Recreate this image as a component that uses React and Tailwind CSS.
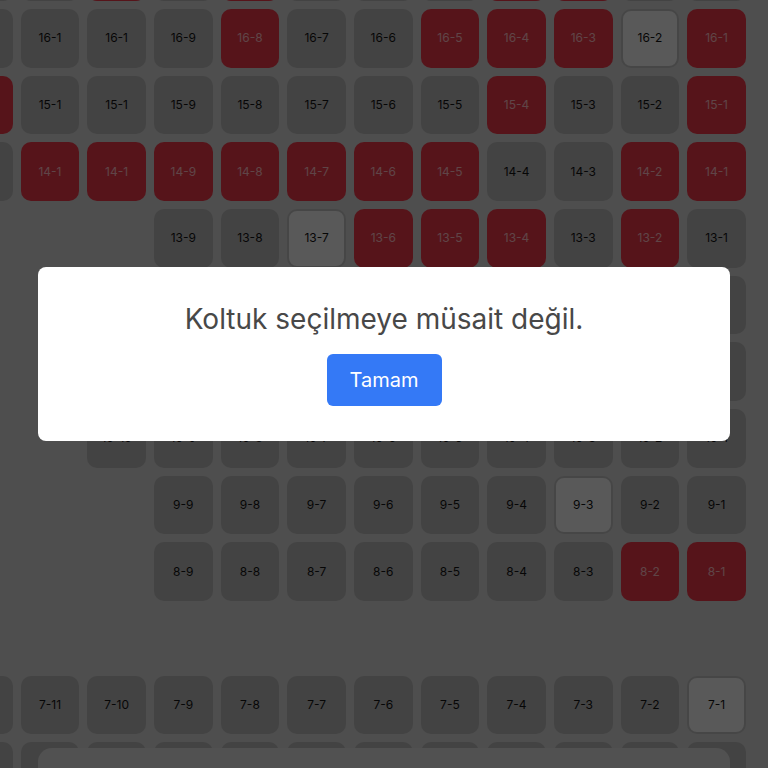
import React from "react";

// Seat states: g = free, r = taken, l = highlighted (outlined), null = no seat
const ROWS = [
  { n: 17, cells: ["g", "g", "r", "g", "r", "g", "g", "g", "r", "r", "g", "g"], labels: [] },
  {
    n: 16,
    cells: ["g", "g", "g", "g", "r", "g", "g", "r", "r", "r", "l", "r"],
    labels: ["", "16-1", "16-1", "16-9", "16-8", "16-7", "16-6", "16-5", "16-4", "16-3", "16-2", "16-1"],
  },
  {
    n: 15,
    cells: ["r", "g", "g", "g", "g", "g", "g", "g", "r", "g", "g", "r"],
    labels: ["", "15-1", "15-1", "15-9", "15-8", "15-7", "15-6", "15-5", "15-4", "15-3", "15-2", "15-1"],
  },
  {
    n: 14,
    cells: ["g", "r", "r", "r", "r", "r", "r", "r", "g", "g", "r", "r"],
    labels: ["", "14-1", "14-1", "14-9", "14-8", "14-7", "14-6", "14-5", "14-4", "14-3", "14-2", "14-1"],
  },
  {
    n: 13,
    cells: [null, null, null, "g", "g", "l", "r", "r", "r", "g", "r", "g"],
    labels: ["", "", "", "13-9", "13-8", "13-7", "13-6", "13-5", "13-4", "13-3", "13-2", "13-1"],
  },
  {
    n: 12,
    cells: [null, null, "g", "g", "g", "g", "g", "g", "g", "g", "g", "g"],
    labels: ["", "", "12-10", "12-9", "12-8", "12-7", "12-6", "12-5", "12-4", "12-3", "12-2", "12-1"],
  },
  {
    n: 11,
    cells: [null, null, "g", "g", "g", "g", "g", "g", "g", "g", "g", "g"],
    labels: ["", "", "11-10", "11-9", "11-8", "11-7", "11-6", "11-5", "11-4", "11-3", "11-2", "11-1"],
  },
  {
    n: 10,
    cells: [null, null, "g", "g", "g", "g", "g", "g", "g", "g", "g", "g"],
    labels: ["", "", "10-10", "10-9", "10-8", "10-7", "10-6", "10-5", "10-4", "10-3", "10-2", "10-1"],
  },
  {
    n: 9,
    cells: [null, null, null, "g", "g", "g", "g", "g", "g", "l", "g", "g"],
    labels: ["", "", "", "9-9", "9-8", "9-7", "9-6", "9-5", "9-4", "9-3", "9-2", "9-1"],
  },
  {
    n: 8,
    cells: [null, null, null, "g", "g", "g", "g", "g", "g", "g", "r", "r"],
    labels: ["", "", "", "8-9", "8-8", "8-7", "8-6", "8-5", "8-4", "8-3", "8-2", "8-1"],
  },
  { n: "gap", cells: [], labels: [] },
  {
    n: 7,
    cells: ["g", "g", "g", "g", "g", "g", "g", "g", "g", "g", "g", "l"],
    labels: ["", "7-11", "7-10", "7-9", "7-8", "7-7", "7-6", "7-5", "7-4", "7-3", "7-2", "7-1"],
  },
  { n: 6, cells: ["g", "g", "g", "g", "g", "g", "g", "g", "g", "g", "g", "g"], labels: [] },
];

function Seat({ kind, label }) {
  if (!kind) return <div className="h-[58.67px] w-[58.67px]" />;
  if (kind === "r") {
    return (
      <div className="flex h-[58.67px] w-[58.67px] items-center justify-center rounded-[10px] bg-[#d63443] text-[12px] text-white/60">
        {label}
      </div>
    );
  }
  if (kind === "l") {
    return (
      <div className="flex h-[58.67px] w-[58.67px] items-center justify-center rounded-[10px] border-2 border-[#b0b0b0] bg-[#dedede] text-[12px] text-[#111]">
        {label}
      </div>
    );
  }
  return (
    <div className="flex h-[58.67px] w-[58.67px] items-center justify-center rounded-[10px] bg-[#a8a8a8] text-[12px] text-[#111]">
      {label}
    </div>
  );
}

export default function App() {
  return (
    <div className="relative h-[768px] w-[768px] overflow-hidden bg-[#c3c3c3] font-['Inter','Noto_Sans',sans-serif]">
      {/* seat map, scrolled so row 16 sits near the top */}
      <div className="ml-[-46px] mt-[-57.67px] flex flex-col gap-[8px]">
        {ROWS.map((row) =>
          row.n === "gap" ? (
            <div key="gap" className="h-[58.67px]" />
          ) : (
            <div key={row.n} className="grid grid-cols-[repeat(12,58.67px)] gap-x-[8px]">
              {row.cells.map((c, i) => (
                <Seat key={i} kind={c} label={row.labels[i] || ""} />
              ))}
            </div>
          )
        )}
      </div>

      {/* summary sheet at the bottom */}
      <div className="absolute bottom-[-40px] left-[38px] right-[38px] h-[60px] rounded-t-[14px] bg-[#cbcbcb]" />

      {/* dimmed backdrop */}
      <div className="absolute inset-0 bg-black/60" />

      {/* alert dialog */}
      <div className="absolute inset-x-0 top-[267px] flex justify-center">
        <div className="flex h-[174px] w-[692px] flex-col items-center rounded-[8px] bg-white pt-[34px]">
          <p className="text-[28px] leading-[36px] text-[#484848]">Koltuk seçilmeye müsait değil.</p>
          <button className="mt-[17px] h-[52px] w-[115px] rounded-[6px] bg-[#3479f6] text-[20px] text-white">
            Tamam
          </button>
        </div>
      </div>
    </div>
  );
}
